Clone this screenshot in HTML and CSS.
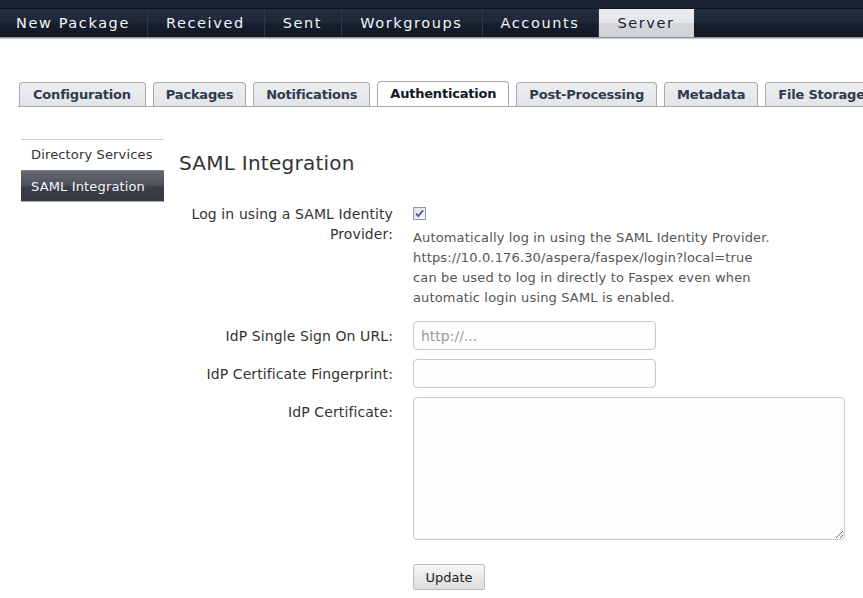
FILE: index.html
```html
<!DOCTYPE html>
<html>
<head>
<meta charset="utf-8">
<title>Server - SAML Integration</title>
<link rel="stylesheet" href="styles.css">
</head>
<body>
<header class="topbar">
  <nav class="mainnav">
    <a class="navitem first">New Package</a>
    <a class="navitem">Received</a>
    <a class="navitem">Sent</a>
    <a class="navitem">Workgroups</a>
    <a class="navitem">Accounts</a>
    <a class="navitem active">Server</a>
  </nav>
</header>

<div class="tabs">
  <a class="tab">Configuration</a>
  <a class="tab">Packages</a>
  <a class="tab">Notifications</a>
  <a class="tab active">Authentication</a>
  <a class="tab">Post-Processing</a>
  <a class="tab">Metadata</a>
  <a class="tab">File Storage</a>
</div>

<div class="content">
  <aside class="sidebar">
    <a class="sideitem">Directory Services</a>
    <a class="sideitem active">SAML Integration</a>
  </aside>
  <main class="main">
    <h1 class="title">SAML Integration</h1>
    <form class="form">
      <div class="row row-first">
        <label class="label label-first">Log in using a SAML Identity Provider:</label>
        <div class="field">
          <span class="checkbox">
            <svg width="13" height="13" viewBox="0 0 13 13">
              <path d="M3 6.5 L5.3 9.2 L10 3.3" fill="none" stroke="#3b5c9e" stroke-width="1.8"/>
            </svg>
          </span>
          <p class="desc">Automatically log in using the SAML Identity Provider.<br>https://10.0.176.30/aspera/faspex/login?local=true can be used to log in directly to Faspex even when automatic login using SAML is enabled.</p>
        </div>
      </div>
      <div class="row row-gap">
        <label class="label">IdP Single Sign On URL:</label>
        <div class="field"><input class="input" type="text" placeholder="http://..."></div>
      </div>
      <div class="row">
        <label class="label">IdP Certificate Fingerprint:</label>
        <div class="field"><input class="input" type="text"></div>
      </div>
      <div class="row">
        <label class="label">IdP Certificate:</label>
        <div class="field"><textarea class="textarea"></textarea></div>
      </div>
      <div class="row row-button">
        <div class="label"></div>
        <div class="field"><button class="button" type="button">Update</button></div>
      </div>
    </form>
  </main>
</div>
</body>
</html>
```

FILE: styles.css
```css
html, body {
  margin: 0;
  padding: 0;
  background: #ffffff;
  font-family: "DejaVu Sans", Verdana, sans-serif;
  font-size: 13px;
  color: #333333;
  overflow: hidden;
}

a { text-decoration: none; cursor: default; }

/* ---------- top navigation ---------- */
.topbar {
  background: #1d2535;
  padding-top: 8px;
  border-bottom: 1px solid #8d939b;
  box-shadow: 0 1px 1px #c9ccd0;
}

.mainnav {
  display: flex;
  height: 28px;
  border-top: 1px solid #0f141d;
  background: linear-gradient(#222d40 0%, #1e283a 45%, #161d2b 55%, #131a26 100%);
}

.navitem {
  display: block;
  padding: 0 19px 0 18px;
  line-height: 28px;
  font-size: 14.5px;
  letter-spacing: 1.6px;
  color: #f3f5f7;
  border-right: 1px solid #2c3648;
}

.navitem.first { padding-left: 16px; padding-right: 17px; }

.navitem.active {
  color: #1b2131;
  border-right: none;
  background: linear-gradient(#e8ecef 0%, #e3e7ea 50%, #d5d6da 52%, #d2d3d7 100%);
}

/* ---------- tabs ---------- */
.tabs {
  display: flex;
  align-items: flex-end;
  gap: 7px;
  margin: 43px 0 0 18px;
  padding-left: 1px;
  height: 25px;
  border-bottom: 1px solid #a7abaf;
  overflow: hidden;
}

.tab {
  flex-shrink: 0;
  display: block;
  padding: 0 12px;
  line-height: 23px;
  font-weight: bold;
  font-size: 13px;
  letter-spacing: -0.2px;
  color: #2e3a50;
  background: linear-gradient(#eceef0, #e2e5e8);
  border: 1px solid #a7abaf;
  border-bottom: none;
  border-radius: 4px 4px 0 0;
}

.tab:first-child { padding: 0 14px 0 13px; }

.tab.active {
  background: #ffffff;
  color: #121828;
  padding-bottom: 2px;
  margin-bottom: -1px;
}

/* ---------- content ---------- */
.content {
  display: flex;
  gap: 15px;
  margin: 32px 0 0 21px;
}

.sidebar {
  width: 143px;
  flex-shrink: 0;
  border-top: 1px solid #c8cacd;
  align-self: flex-start;
}

.sideitem {
  display: block;
  padding-left: 10px;
  line-height: 30px;
  letter-spacing: 0.15px;
  color: #333333;
}

.sideitem.active {
  color: #f4f5f7;
  line-height: 29px;
  padding-top: 1px;
  border-top: 1px solid #80838d;
  border-bottom: 1px solid #a9abb0;
  background: linear-gradient(#64676f 0%, #50535d 45%, #3b3e49 55%, #353743 100%);
}

.main {
  flex: 1;
  min-width: 0;
}

.title {
  margin: 12px 0 0 0;
  font-size: 20px;
  line-height: 24px;
  font-weight: normal;
  letter-spacing: 0.25px;
  color: #333333;
}

.form {
  margin-top: 29px;
}

.row {
  display: flex;
  gap: 20px;
  margin-top: 9px;
}

.row-first { margin-top: 0; }
.row-gap { margin-top: 13px; }
.row-button { margin-top: 24px; }

.label {
  width: 214px;
  flex-shrink: 0;
  text-align: right;
  font-size: 14px;
  letter-spacing: 0.1px;
  line-height: 20px;
  padding-top: 5px;
  color: #333333;
}

.label-first { padding-top: 0; }

.field {
  flex: 1;
  min-width: 0;
}

.checkbox {
  display: block;
  width: 11px;
  height: 11px;
  margin-top: 3px;
  border: 1px solid #8d9cad;
  background: linear-gradient(135deg, #dde3e9, #f7f9fa);
  position: relative;
}

.checkbox svg {
  position: absolute;
  left: -1px;
  top: -1px;
}

.desc {
  margin: 8px 0 0 0;
  max-width: 358px;
  line-height: 20px;
  letter-spacing: 0.15px;
  color: #555555;
}

.input {
  display: block;
  box-sizing: border-box;
  width: 243px;
  height: 29px;
  padding: 0 7px;
  border: 1px solid #c9c9c9;
  border-radius: 4px;
  background: #fdfefd;
  font-family: "DejaVu Sans", Verdana, sans-serif;
  font-size: 14px;
  color: #333333;
  outline: none;
}

.input::placeholder { color: #9a9a9a; }

.textarea {
  display: block;
  box-sizing: border-box;
  width: 432px;
  height: 143px;
  margin: 0;
  padding: 4px 7px;
  border: 1px solid #c9c9c9;
  border-radius: 4px;
  background: #fcfefc;
  font-family: "DejaVu Sans", Verdana, sans-serif;
  font-size: 13px;
  outline: none;
}

.button {
  display: block;
  width: 72px;
  height: 26px;
  padding: 0;
  border: 1px solid #bcbcbc;
  border-radius: 2px;
  background: linear-gradient(#f7f7f7, #e6e6e6 60%, #dedede);
  font-family: "DejaVu Sans", Verdana, sans-serif;
  font-size: 13px;
  color: #222222;
}
```
